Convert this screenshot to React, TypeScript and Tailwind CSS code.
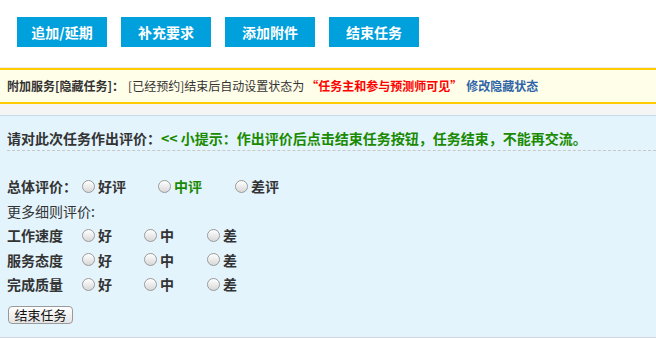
import React from "react";

const font = { fontFamily: '"Noto Sans CJK SC", "Liberation Sans", sans-serif' };

const topButtons = ["追加/延期", "补充要求", "添加附件", "结束任务"];

const Radio = () => (
    <span className="inline-block size-[13px] shrink-0 rounded-full border border-[#9a9a9a] bg-gradient-to-b from-[#ffffff] to-[#d8d8d8] shadow-[inset_0_1px_1px_rgba(255,255,255,0.9)]"></span>
);

const Option = ({ label, width, green }: { label: string; width: string; green?: boolean }) => (
    <div className={`flex items-center gap-[3px] ${width}`}>
        <Radio />
        <span className={`font-bold ${green ? "text-[#1a8a00]" : "text-[#333]"}`}>{label}</span>
    </div>
);

const details = ["工作速度", "服务态度", "完成质量"];

export default function App() {
    return (
        <div className="w-[656px] h-[338px] bg-white text-[#333] overflow-hidden" style={font}>
            <div className="flex gap-[14px] pl-[17px] pt-[17px]">
                {topButtons.map((b) => (
                    <div key={b} className="w-[90px] h-[30px] flex items-center justify-center bg-[#00a0dc] text-white text-[14px] font-bold">
                        {b}
                    </div>
                ))}
            </div>

            <div className="mt-[20px] border-t border-[#ececec]">
                <div className="h-[36px] border-y-2 border-[#ffcc00] bg-[#fffee9] flex items-center pl-[7px] text-[12px] whitespace-nowrap">
                    <span className="font-bold text-[#333]">附加服务[隐藏任务]：</span>
                    <span className="ml-[4px] text-[#333]">[已经预约]结束后自动设置状态为</span>
                    <span className="ml-[2px] font-bold text-[#ff0000]">“任务主和参与预测师可见”</span>
                    <span className="ml-[4px] font-bold text-[#2f65a8]">修改隐藏状态</span>
                </div>
            </div>

            <div className="h-[11px] bg-[#f5f5f5]"></div>

            <div className="h-[223px] border-t border-[#c7dce9] border-b border-b-[#cfd6dc] bg-[#e3f4fd] pl-[7px]">
                <div className="pt-[12px] pb-[2px] border-b border-dashed border-[#c8c8c8] text-[14px] leading-[20px] font-bold whitespace-nowrap">
                    <span className="text-[#333]">请对此次任务作出评价：</span>
                    <span className="text-[#1a8a00]">&lt;&lt; 小提示：作出评价后点击结束任务按钮，任务结束，不能再交流。</span>
                </div>

                <div className="mt-[23px] text-[14px] leading-[24.5px]">
                    <div className="flex items-center h-[24.5px]">
                        <span className="w-[75px] font-bold">总体评价：</span>
                        <Option label="好评" width="w-[76px]" />
                        <Option label="中评" width="w-[77px]" green />
                        <Option label="差评" width="w-[77px]" />
                    </div>
                    <div className="h-[24.5px]">更多细则评价:</div>
                    {details.map((d) => (
                        <div key={d} className="flex items-center h-[24.5px]">
                            <span className="w-[75px] font-bold">{d}</span>
                            <Option label="好" width="w-[62px]" />
                            <Option label="中" width="w-[63px]" />
                            <Option label="差" width="w-[63px]" />
                        </div>
                    ))}
                </div>

                <div className="mt-[9px] ml-[1px] w-[65px] h-[18px] flex items-center justify-center rounded-[4px] border border-[#9a9a9a] bg-gradient-to-b from-[#ffffff] to-[#e4e4e4] text-[13px] text-[#111]">
                    结束任务
                </div>
            </div>
        </div>
    );
}
